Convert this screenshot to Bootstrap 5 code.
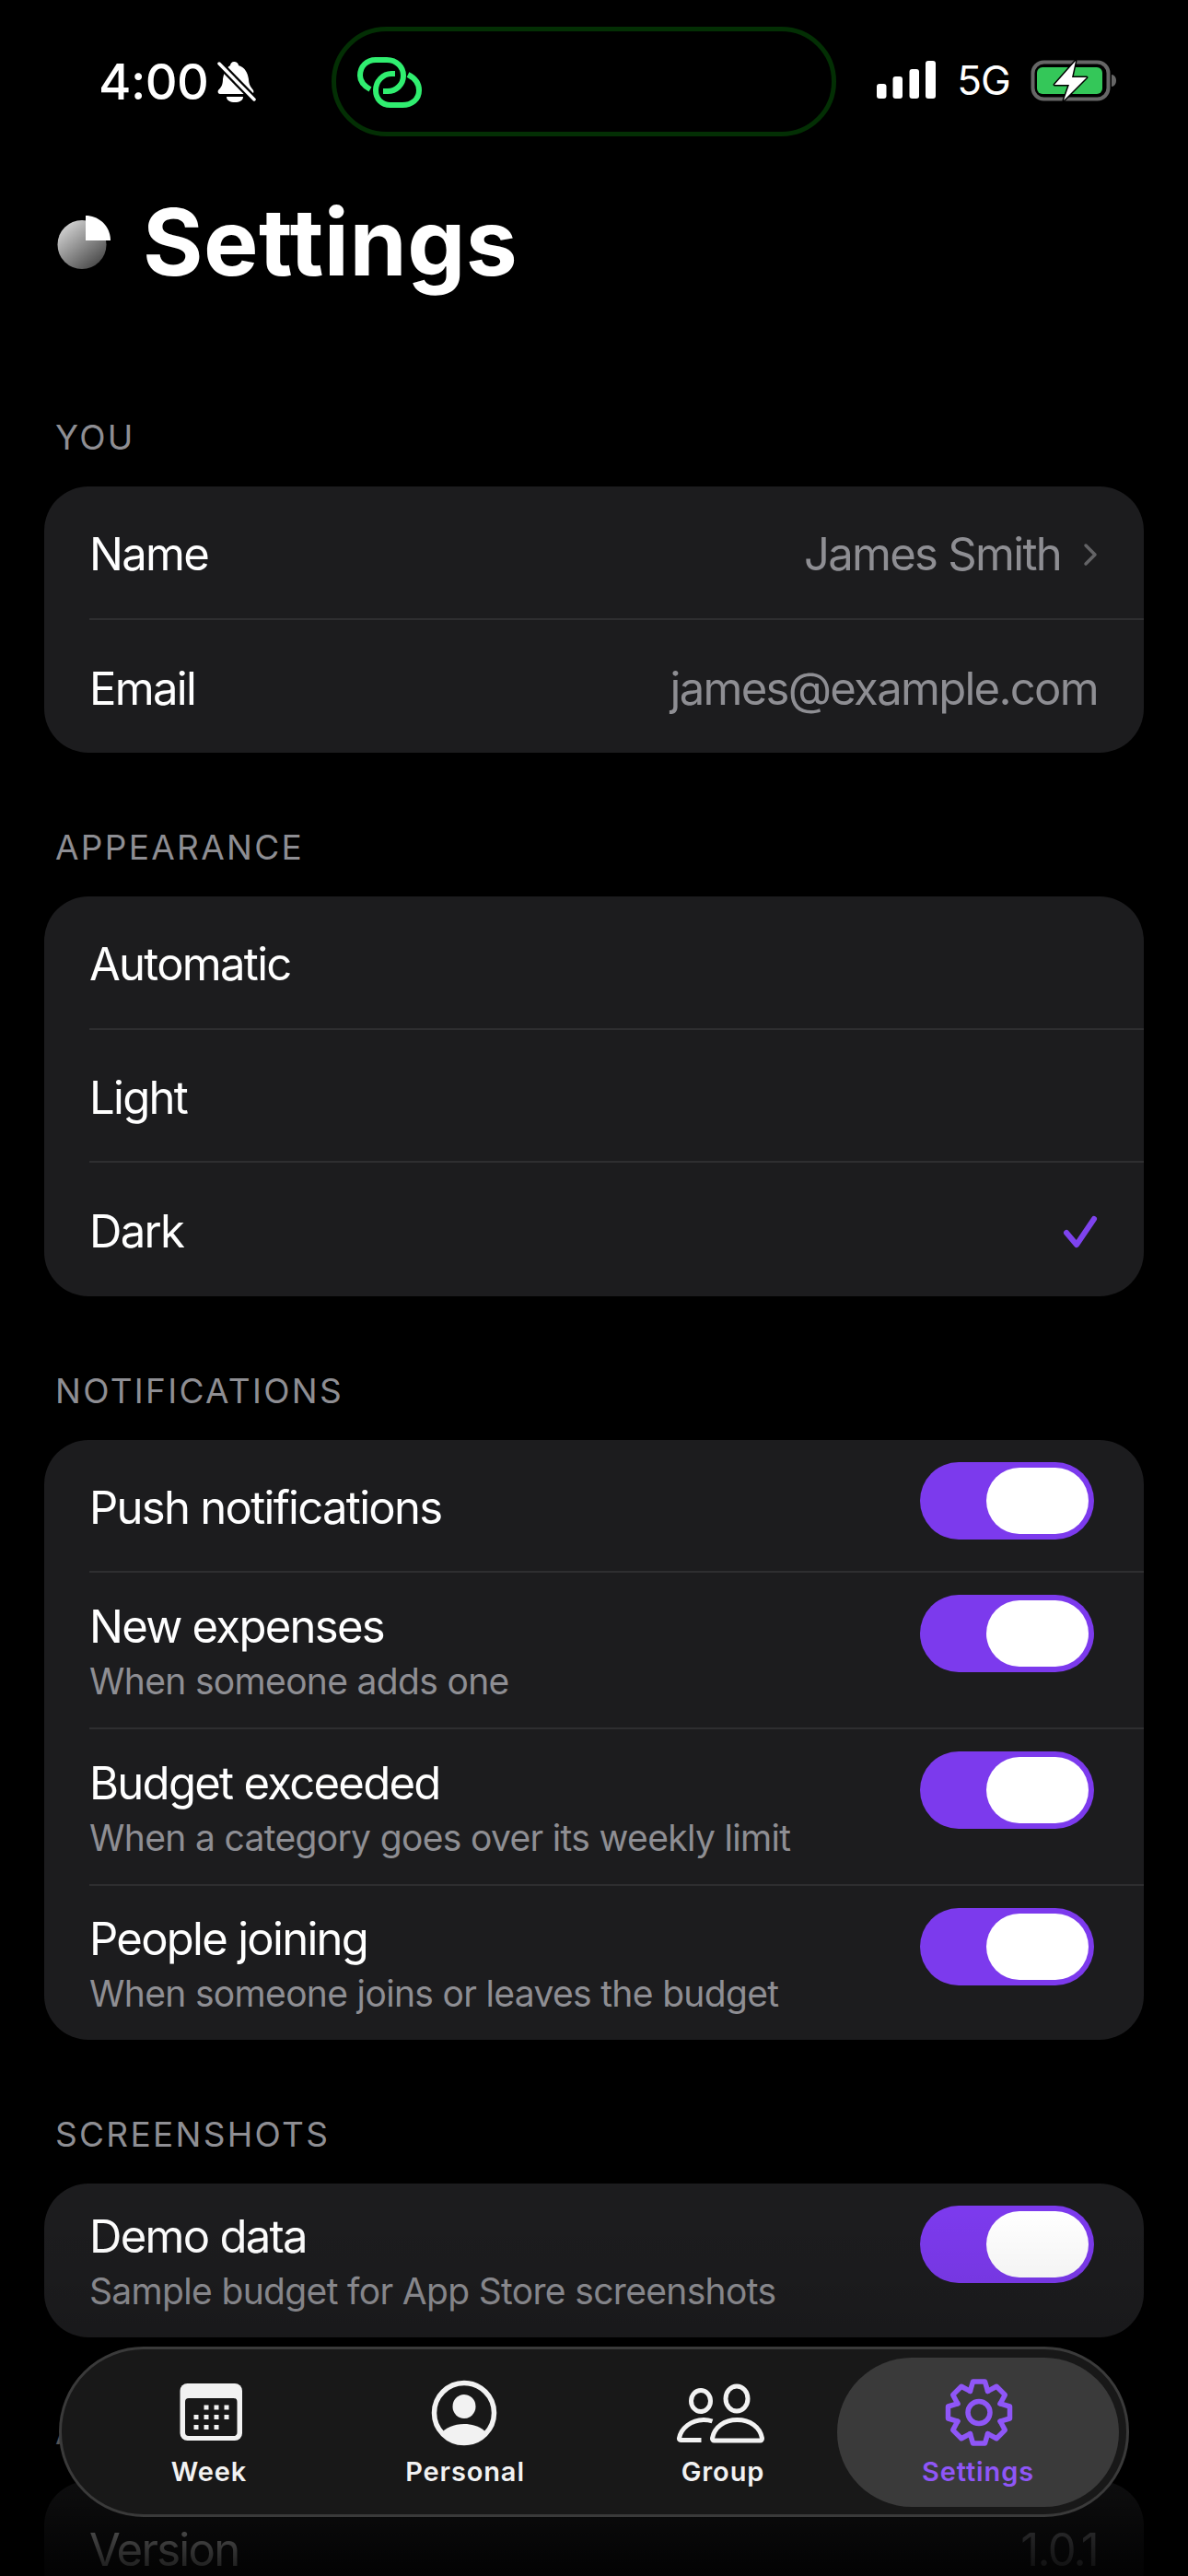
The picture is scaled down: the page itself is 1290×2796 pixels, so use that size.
<!DOCTYPE html>
<html lang="en">
<head>
  <meta charset="UTF-8">
  <meta name="viewport" content="width=device-width, initial-scale=1">
  <title>Settings</title>
  <link href="https://cdn.jsdelivr.net/npm/bootstrap@5.3.3/dist/css/bootstrap.min.css" rel="stylesheet">
  <style>
    body {
      background-color: #000;
      color: #fff;
      font-family: Inter, "Liberation Sans", sans-serif;
      height: 2796px;
      overflow: hidden;
    }
    .phone {
      position: relative;
      height: 2796px;
      overflow: hidden;
    }
    .status-bar {
      padding: 29px 76px 0 107px;
      height: 148px;
    }
    .clock {
      font-size: 54px;
      font-weight: 500;
      line-height: 1;
      letter-spacing: -0.01em;
    }
    .island {
      width: 548px;
      height: 119px;
      margin-left: 3px;
      border: 5px solid #032f04;
      border-radius: 60px;
      padding-left: 23px;
    }
    .net {
      font-size: 44px;
      line-height: 1;
      letter-spacing: -0.02em;
    }
    .title-row {
      padding-left: 62px;
      margin-top: 55px;
      height: 120px;
    }
    .title-row h1 {
      font-size: 100px;
      font-weight: 700;
      line-height: 120px;
      margin: 0 0 0 35px;
      letter-spacing: 0.005em;
    }
    .content {
      padding: 129px 48px 0;
    }
    .sec-label {
      font-size: 37px;
      line-height: 46px;
      height: 44px;
      margin: 0 0 32px 12px;
      color: #8e8e93;
      letter-spacing: 2.3px;
    }
    .sheet {
      background: #1c1c1e;
      border-radius: 48px;
      margin-bottom: 80px;
    }
    .sheet-row {
      background: transparent;
      border: 0;
      color: #fff;
      padding: 0 0 0 49px;
      height: 144.5px;
    }
    .sheet-row.two-line {
      height: 170px;
    }
    .sheet-row.last-two {
      height: 167px;
    }
    .row-in {
      height: 100%;
      width: 100%;
      padding-right: 50px;
      border-bottom: 2px solid #2e2e30;
    }
    .sheet-row:last-child .row-in {
      border-bottom: 0;
    }
    .row-name,
    .row-val {
      font-size: 49px;
      line-height: 60px;
      letter-spacing: -0.035em;
    }
    .row-val {
      color: #8e8e93;
    }
    .row-in.align-items-center .row-name,
    .row-in.align-items-center .row-val {
      padding-top: 6px;
    }
    .row-in.align-items-center svg {
      margin-top: 6px;
    }
    .row-sub {
      font-size: 39px;
      line-height: 48px;
      margin-top: 5px;
      color: #8e8e93;
      letter-spacing: -0.017em;
    }
    .two-line .row-text {
      padding-top: 29px;
    }
    .last-two .row-text {
      padding-top: 28px;
    }
    .tgl {
      width: 189px;
      height: 84px;
      margin: 24px 4px 0 0;
      padding: 6px;
      border-radius: 42px;
      background: #7c3aed;
    }
    .tgl-thumb {
      width: 111px;
      height: 72px;
      border-radius: 36px;
      background: #fff;
    }
    .fade-out {
      position: absolute;
      left: 0;
      right: 0;
      top: 2400px;
      bottom: 0;
      pointer-events: none;
      background: linear-gradient(to bottom, rgba(0,0,0,0) 0%, rgba(0,0,0,.05) 20%, rgba(0,0,0,.12) 35%, rgba(0,0,0,.55) 76%, rgba(0,0,0,.88) 98%);
    }
    .tabbar {
      position: absolute;
      left: 64px;
      top: 2547px;
      width: 1162px;
      height: 185px;
      padding: 9px 0 9px 21px;
      border: 3px solid #3a3a3a;
      border-radius: 92px;
      background: #181818;
    }
    .tab-item {
      flex: 0 0 278px;
      height: 162px;
      color: #f2f2f2;
      font-size: 29px;
      font-weight: 600;
      line-height: 36px;
      letter-spacing: 0.03em;
    }
    .tab-item svg {
      display: block;
      margin-bottom: 5px;
    }
    .tab-item.active {
      flex-basis: 306px;
      margin-left: -13px;
      border-radius: 81px;
      background: #3a3a3a;
      color: #8f56f7;
    }
  </style>
</head>
<body>
  <div class="phone">
    <div class="status-bar d-flex align-items-start">
      <div class="d-flex align-items-center" style="width:250px;height:119px;">
        <span class="clock">4:00</span>
        <svg class="ms-2" width="44" height="48" viewBox="238 64 44 48">
          <path d="M258 66c3 0 5 2 5 4 7 2 10 8 11 15 0 6 3 9 5 12 1 2 0 4-2 4h-34c-2 0-3-2-2-4 3-3 5-6 5-12 1-7 4-13 8-15 0-2 2-4 4-4z" fill="#fff"/>
          <path d="M250 104h18c0 4-4 6-9 6s-9-2-9-6z" fill="#fff"/>
          <path d="M241 67l39 40" stroke="#000" stroke-width="8"/>
          <path d="M242 68l38 39" stroke="#fff" stroke-width="3.5" stroke-linecap="round"/>
        </svg>
      </div>
      <div class="island d-flex align-items-center">
        <svg width="70" height="56" viewBox="388 60 70 56" fill="none" stroke="#30ee70" stroke-width="6">
          <path d="M402 96C395 92 391 87 391 81C391 71 398 64 408 64H420C431 64 438 72 438 81C438 91 430 98 421 98H416"/>
          <path d="M443 80C451 84 455 90 455 97C455 107 447 113 437 113H424C414 113 408 106 408 97C408 87 416 79 425 79H429"/>
        </svg>
      </div>
      <div class="d-flex align-items-center ms-auto" style="height:115px;">
        <svg width="66" height="42" viewBox="951 66 66 42" fill="#fff">
          <rect x="952" y="91" width="10.500" height="16" rx="3"/>
          <rect x="969.500" y="83" width="10.500" height="24" rx="3"/>
          <rect x="987.500" y="75" width="10.500" height="32" rx="3"/>
          <rect x="1005" y="66" width="11" height="41" rx="3"/>
        </svg>
        <span class="net" style="margin:0 21px 0 22px;">5G</span>
        <svg width="96" height="48" viewBox="1118 62 96 48">
          <rect x="1121.500" y="66.500" width="82" height="40" rx="12" fill="none" stroke="#666" stroke-width="4"/>
          <rect x="1126" y="72" width="71" height="29" rx="6" fill="#34c759"/>
          <path d="M1207 80c3 0 5 3 5 6.500s-2 6.500-5 6.500z" fill="#666"/>
          <path d="M1168 65l-23 26h16l-6 17 25-25h-16z" fill="#fff" stroke="#000" stroke-width="3" stroke-linejoin="round" paint-order="stroke"/>
        </svg>
      </div>
    </div>

    <div class="title-row d-flex align-items-center">
      <svg width="58" height="58" viewBox="62 233 58 58">
        <defs>
          <linearGradient id="orbGrad" x1="0" y1="0" x2="0.8" y2="1">
            <stop offset="0" stop-color="#e6e6e6"/>
            <stop offset="1" stop-color="#454545"/>
          </linearGradient>
        </defs>
        <circle cx="89" cy="264.500" r="26.500" fill="url(#orbGrad)"/>
        <path d="M93 233c15 0 27 12 27 27h-27z" fill="#fff"/>
      </svg>
      <h1>Settings</h1>
    </div>

    <div class="content">
      <div class="sec-label">YOU</div>
      <div class="list-group sheet">
        <div class="list-group-item sheet-row">
          <div class="row-in d-flex align-items-center justify-content-between">
            <span class="row-name">Name</span>
            <span class="d-flex align-items-center">
              <span class="row-val">James Smith</span>
              <svg class="ms-4" width="16" height="28" viewBox="0 0 16 28" fill="none" stroke="#636366" stroke-width="3.500" stroke-linecap="round" stroke-linejoin="round"><path d="M3 4l10 10-10 10"/></svg>
            </span>
          </div>
        </div>
        <div class="list-group-item sheet-row">
          <div class="row-in d-flex align-items-center justify-content-between">
            <span class="row-name">Email</span>
            <span class="row-val">james@example.com</span>
          </div>
        </div>
      </div>

      <div class="sec-label">APPEARANCE</div>
      <div class="list-group sheet">
        <div class="list-group-item sheet-row">
          <div class="row-in d-flex align-items-center"><span class="row-name">Automatic</span></div>
        </div>
        <div class="list-group-item sheet-row">
          <div class="row-in d-flex align-items-center"><span class="row-name">Light</span></div>
        </div>
        <div class="list-group-item sheet-row">
          <div class="row-in d-flex align-items-center justify-content-between">
            <span class="row-name">Dark</span>
            <svg width="38" height="38" viewBox="1154 1317 38 38" fill="none" stroke="#7e43ee" stroke-width="6" stroke-linecap="round" stroke-linejoin="round"><path d="M1158 1337l11 13 19-28"/></svg>
          </div>
        </div>
      </div>

      <div class="sec-label">NOTIFICATIONS</div>
      <div class="list-group sheet">
        <div class="list-group-item sheet-row">
          <div class="row-in d-flex align-items-center justify-content-between">
            <span class="row-name">Push notifications</span>
            <span class="tgl d-flex justify-content-end align-self-start"><span class="tgl-thumb"></span></span>
          </div>
        </div>
        <div class="list-group-item sheet-row two-line">
          <div class="row-in d-flex align-items-start justify-content-between">
            <div class="row-text">
              <div class="row-name">New expenses</div>
              <div class="row-sub">When someone adds one</div>
            </div>
            <span class="tgl d-flex justify-content-end"><span class="tgl-thumb"></span></span>
          </div>
        </div>
        <div class="list-group-item sheet-row two-line">
          <div class="row-in d-flex align-items-start justify-content-between">
            <div class="row-text">
              <div class="row-name">Budget exceeded</div>
              <div class="row-sub">When a category goes over its weekly limit</div>
            </div>
            <span class="tgl d-flex justify-content-end"><span class="tgl-thumb"></span></span>
          </div>
        </div>
        <div class="list-group-item sheet-row last-two">
          <div class="row-in d-flex align-items-start justify-content-between">
            <div class="row-text">
              <div class="row-name">People joining</div>
              <div class="row-sub">When someone joins or leaves the budget</div>
            </div>
            <span class="tgl d-flex justify-content-end"><span class="tgl-thumb"></span></span>
          </div>
        </div>
      </div>

      <div class="sec-label">SCREENSHOTS</div>
      <div class="list-group sheet">
        <div class="list-group-item sheet-row last-two">
          <div class="row-in d-flex align-items-start justify-content-between">
            <div class="row-text">
              <div class="row-name">Demo data</div>
              <div class="row-sub">Sample budget for App Store screenshots</div>
            </div>
            <span class="tgl d-flex justify-content-end"><span class="tgl-thumb"></span></span>
          </div>
        </div>
      </div>

      <div class="sec-label">ACCOUNT</div>
      <div class="list-group sheet">
        <div class="list-group-item sheet-row">
          <div class="row-in d-flex align-items-center justify-content-between">
            <span class="row-name">Version</span>
            <span class="row-val">1.0.1</span>
          </div>
        </div>
      </div>
    </div>

    <div class="fade-out"></div>

    <nav class="tabbar d-flex">
      <div class="tab-item d-flex flex-column align-items-center justify-content-center">
        <svg width="100" height="80" viewBox="177 2580 100 80">
          <rect x="195.500" y="2587" width="67.500" height="62" rx="8" fill="#f2f2f2"/>
          <rect x="201" y="2603" width="56.500" height="41" rx="4" fill="#181818"/>
          <g fill="#f2f2f2">
            <rect x="221.500" y="2610.500" width="5" height="5"/><rect x="232.500" y="2610.500" width="5" height="5"/><rect x="243.500" y="2610.500" width="5" height="5"/>
            <rect x="210.500" y="2621" width="5" height="5"/><rect x="221.500" y="2621" width="5" height="5"/><rect x="232.500" y="2621" width="5" height="5"/><rect x="243.500" y="2621" width="5" height="5"/>
            <rect x="210.500" y="2632" width="5" height="5"/><rect x="221.500" y="2632" width="5" height="5"/><rect x="232.500" y="2632" width="5" height="5"/>
          </g>
        </svg>
        <span>Week</span>
      </div>
      <div class="tab-item d-flex flex-column align-items-center justify-content-center">
        <svg width="100" height="80" viewBox="456 2580 100 80">
          <circle cx="505" cy="2619" r="32.500" fill="none" stroke="#f2f2f2" stroke-width="5.500"/>
          <ellipse cx="505" cy="2612" rx="12.500" ry="13" fill="#f2f2f2"/>
          <path d="M480 2642c4-7 14-11 25-11s21 4 25 11c-6 7-15 11-25 11s-19-4-25-11z" fill="#f2f2f2"/>
        </svg>
        <span>Personal</span>
      </div>
      <div class="tab-item d-flex flex-column align-items-center justify-content-center">
        <svg width="100" height="80" viewBox="734.500 2580 100 80" fill="none" stroke="#f2f2f2" stroke-width="5">
          <ellipse cx="762.500" cy="2606" rx="10.500" ry="11.500"/>
          <ellipse cx="801.500" cy="2603.500" rx="12" ry="13.500"/>
          <path d="M775 2628c-3-1-6-1.500-9-1.500-14 0-25 9-27 20-.3 1.500 1 2 2 2h22"/>
          <path d="M802 2626.500c-14 0-25 8-27 20-.2 1.500.8 2.500 2 2.500h50c1.200 0 2.200-1 2-2.500-2-12-13-20-27-20z"/>
        </svg>
        <span class="ps-1">Group</span>
      </div>
      <div class="tab-item active d-flex flex-column align-items-center justify-content-center">
        <svg width="100" height="80" viewBox="1012 2580 100 80" fill="none" stroke="#8f56f7" stroke-width="5.500" stroke-linecap="round" stroke-linejoin="round">
          <defs>
            <path id="gearTooth" d="M-9.600-23.100L-6.500-33.500H6.500L9.600-23.100"/>
          </defs>
          <g transform="translate(1063 2618.500)">
            <use href="#gearTooth"/>
            <use href="#gearTooth" transform="rotate(45)"/>
            <use href="#gearTooth" transform="rotate(90)"/>
            <use href="#gearTooth" transform="rotate(135)"/>
            <use href="#gearTooth" transform="rotate(180)"/>
            <use href="#gearTooth" transform="rotate(225)"/>
            <use href="#gearTooth" transform="rotate(270)"/>
            <use href="#gearTooth" transform="rotate(315)"/>
            <circle r="12"/>
          </g>
        </svg>
        <span>Settings</span>
      </div>
    </nav>
  </div>

  <script src="https://cdn.jsdelivr.net/npm/bootstrap@5.3.3/dist/js/bootstrap.bundle.min.js"></script>
</body>
</html>
